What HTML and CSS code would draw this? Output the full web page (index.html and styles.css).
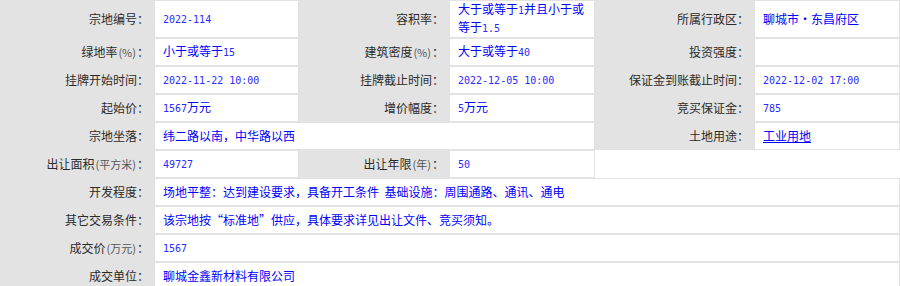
FILE: index.html
```html
<!DOCTYPE html>
<html lang="zh-CN">
<head>
<meta charset="utf-8">
<title>宗地信息</title>
<link rel="stylesheet" href="styles.css">
</head>
<body>
<table class="info">
  <colgroup>
    <col class="c1"><col class="c2"><col class="c3"><col class="c4"><col class="c5"><col class="c6">
  </colgroup>
  <tr>
    <td class="lbl">宗地编号：</td>
    <td class="val"><span class="num">2022-114</span></td>
    <td class="lbl">容积率：</td>
    <td class="val tall"><span class="ln">大于或等于<span class="num">1</span>并且小于或</span><br><span class="ln">等于<span class="num">1.5</span></span></td>
    <td class="lbl">所属行政区：</td>
    <td class="val">聊城市·东昌府区</td>
  </tr>
  <tr>
    <td class="lbl">绿地率<span class="paren">(%)</span>：</td>
    <td class="val">小于或等于<span class="num">15</span></td>
    <td class="lbl">建筑密度<span class="paren">(%)</span>：</td>
    <td class="val">大于或等于<span class="num">40</span></td>
    <td class="lbl">投资强度：</td>
    <td class="val"></td>
  </tr>
  <tr>
    <td class="lbl">挂牌开始时间：</td>
    <td class="val"><span class="num">2022-11-22 10:00</span></td>
    <td class="lbl">挂牌截止时间：</td>
    <td class="val"><span class="num">2022-12-05 10:00</span></td>
    <td class="lbl">保证金到账截止时间：</td>
    <td class="val"><span class="num">2022-12-02 17:00</span></td>
  </tr>
  <tr>
    <td class="lbl">起始价：</td>
    <td class="val"><span class="num">1567</span>万元</td>
    <td class="lbl">增价幅度：</td>
    <td class="val"><span class="num">5</span>万元</td>
    <td class="lbl">竞买保证金：</td>
    <td class="val"><span class="num">785</span></td>
  </tr>
  <tr>
    <td class="lbl">宗地坐落：</td>
    <td class="val" colspan="3">纬二路以南，中华路以西</td>
    <td class="lbl">土地用途：</td>
    <td class="val"><a class="link" href="#">工业用地</a></td>
  </tr>
  <tr>
    <td class="lbl">出让面积<span class="paren">(平方米)</span>：</td>
    <td class="val"><span class="num">49727</span></td>
    <td class="lbl">出让年限<span class="paren">(年)</span>：</td>
    <td class="val"><span class="num">50</span></td>
    <td class="void" colspan="2"></td>
  </tr>
  <tr>
    <td class="lbl">开发程度：</td>
    <td class="val" colspan="5">场地平整：达到建设要求，具备开工条件&nbsp; 基础设施：周围通路、通讯、通电</td>
  </tr>
  <tr>
    <td class="lbl">其它交易条件：</td>
    <td class="val" colspan="5">该宗地按“标准地”供应，具体要求详见出让文件、竞买须知。</td>
  </tr>
  <tr>
    <td class="lbl">成交价<span class="paren">(万元)</span>：</td>
    <td class="val" colspan="5"><span class="num">1567</span></td>
  </tr>
  <tr>
    <td class="lbl">成交单位：</td>
    <td class="val" colspan="5">聊城金鑫新材料有限公司</td>
  </tr>
</table>
</body>
</html>
```
FILE: styles.css
```css
html, body {
  margin: 0;
  padding: 0;
  background: #ffffff;
}

body {
  font-family: "Noto Sans CJK SC", "DejaVu Sans", sans-serif;
  font-size: 12px;
}

.info {
  width: 900px;
  table-layout: fixed;
  border-collapse: separate;
  border-spacing: 0;
}

.c1 { width: 154px; }
.c2 { width: 145px; }
.c3 { width: 150px; }
.c4 { width: 146px; }
.c5 { width: 159px; }
.c6 { width: 146px; }

.info tr {
  height: 28px;
}

.info td {
  border: 1px solid #e2e2e2;
  padding: 2px 0;
  line-height: 14px;
  vertical-align: middle;
}

.info td.tall {
  padding-top: 0;
  padding-bottom: 0;
  line-height: 16px;
}

.ln {
  white-space: nowrap;
}

.lbl {
  background: #e3e3e3;
  color: #2b2b2b;
  text-align: right;
  padding-right: 4px !important;
}

.val {
  background: #ffffff;
  color: #0000ff;
  text-align: left;
  padding-left: 8px !important;
  padding-right: 4px !important;
}

.num {
  font-family: "DejaVu Sans Mono", "Liberation Mono", monospace;
  font-size: 10px;
  color: #2a2aff;
}

.paren {
  font-size: 11px;
  color: #555555;
  padding: 0 1px;
}

.link {
  color: #0000ff;
  text-decoration: underline;
}

.info td.void {
  border: none;
  background: transparent;
}
```
